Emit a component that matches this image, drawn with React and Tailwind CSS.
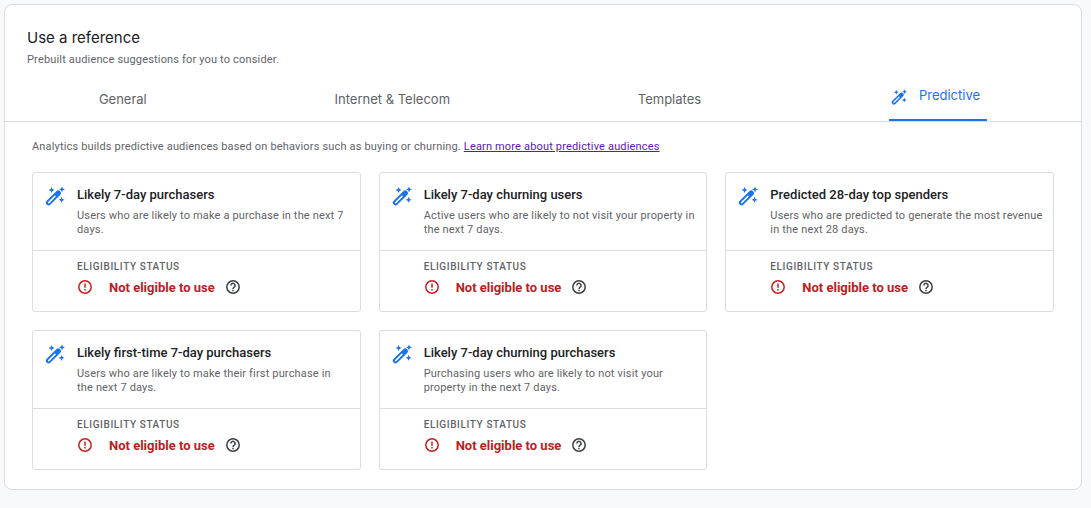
import React from "react";

const audiences = [
  { title: "Likely 7-day purchasers", text: "Users who are likely to make a purchase in the next 7 days." },
  { title: "Likely 7-day churning users", text: "Active users who are likely to not visit your property in the next 7 days." },
  { title: "Predicted 28-day top spenders", text: "Users who are predicted to generate the most revenue in the next 28 days." },
  { title: "Likely first-time 7-day purchasers", text: "Users who are likely to make their first purchase in the\u00a0next 7 days." },
  { title: "Likely 7-day churning purchasers", text: "Purchasing users who are likely to not visit your property in the next 7 days." },
];

function Wand({ className }) {
  return (
    <svg viewBox="0 0 20 20" className={className} aria-hidden="true">
      <path d="M3.6 16.7L13.2 7.1" stroke="#1a73e8" strokeWidth="5.4" strokeLinecap="round" />
      <path d="M3.7 16.6L10 10.3" stroke="#fff" strokeWidth="1.5" strokeLinecap="round" />
      <g fill="#1a73e8">
        <path d="M6.6 1l.9 2.1 2.1.9-2.1.9-.9 2.1-.9-2.1-2.1-.9 2.1-.9z" />
        <path d="M17 .4l.9 2.1 2.1.9-2.1.9-.9 2.1-.9-2.1-2.1-.9 2.1-.9z" />
        <path d="M16.6 10.8l.9 2.1 2.1.9-2.1.9-.9 2.1-.9-2.1-2.1-.9 2.1-.9z" />
      </g>
    </svg>
  );
}

function ErrorIcon({ className }) {
  return (
    <svg viewBox="0 0 16 16" className={className} fill="none" stroke="currentColor" strokeWidth="1.5" aria-hidden="true">
      <circle cx="8" cy="8" r="6.2" />
      <path d="M8 4.5v4.2M8 9.9v1.6" />
    </svg>
  );
}

function HelpIcon({ className }) {
  return (
    <svg viewBox="0 0 16 16" className={className} fill="none" stroke="currentColor" strokeWidth="1.5" aria-hidden="true">
      <circle cx="8" cy="8" r="6.2" />
      <path d="M5.9 6.5a2.1 2.1 0 1 1 3.3 1.7C8.4 8.8 8 9.1 8 9.9M8 10.7v1.5" />
    </svg>
  );
}

function AudienceCard({ title, text }) {
  return (
    <article className="rounded-[3px] border border-[#dadce0]">
      <div className="flex gap-3 border-b border-[#dadce0] py-[13px] pr-2.5 pl-3">
        <Wand className="size-5 shrink-0" />
        <div className="pt-px">
          <h2 className="text-[13px] leading-4 font-medium text-[#202124]">{title}</h2>
          <p className="mt-1.5 text-[11px] leading-[14px] tracking-[0.015em] text-[#5f6368]">{text}</p>
        </div>
      </div>
      <div className="pt-2.5 pb-[13px] pl-11">
        <h3 className="text-[10px] leading-3 font-medium tracking-[0.06em] text-[#5f6368] uppercase">Eligibility status</h3>
        <div className="mt-[5px] flex items-start">
          <ErrorIcon className="mt-px size-4 text-[#c5221f]" />
          <span className="ml-4 text-[13px] leading-5 font-bold text-[#b9211f]">Not eligible to use</span>
          <button type="button" aria-label="Eligibility help" className="mt-px ml-2.5 text-[#3c4043]">
            <HelpIcon className="size-4" />
          </button>
        </div>
      </div>
    </article>
  );
}

export default function App() {
  return (
    <div className="min-h-screen bg-[#f8f9fa] pt-1 pr-[9px] pb-4 pl-1 font-['Roboto',sans-serif]">
      <main className="rounded-lg border border-[#dadce0] bg-white">
        <header className="px-[22px] pt-[23px]">
          <h1 className="font-['Inter',sans-serif] text-[15px] leading-5 text-[#202124]">Use a reference</h1>
          <p className="mt-1 text-[11px] leading-4 tracking-[0.015em] text-[#5f6368]">Prebuilt audience suggestions for you to consider.</p>
        </header>
        <div role="tablist" className="mt-1 flex h-[50px] justify-around border-b border-[#dadce0] font-['Inter',sans-serif] text-[13px] leading-4 text-[#5f6368]">
          {["General", "Internet & Telecom", "Templates"].map((tab) => (
            <button key={tab} type="button" role="tab" aria-selected="false" className="pt-1">{tab}</button>
          ))}
          <button type="button" role="tab" aria-selected="true" className="flex items-center gap-3 border-b-2 border-[#1a73e8] pr-[7px] pb-0.5 pl-0.5 text-[#1a73e8]">
            <Wand className="mt-1 size-4" />
            Predictive
          </button>
        </div>
        <section className="pt-[17px] pr-[27px] pb-[19px] pl-[27px]">
          <p className="text-[11px] leading-4 tracking-[0.015em] text-[#5f6368]">
            Analytics builds predictive audiences based on behaviors such as buying or churning.{" "}
            <a href="#learn-more" className="text-[#5b17c0] underline">Learn more about predictive audiences</a>
          </p>
          <div className="mt-[17px] grid grid-cols-3 gap-[18px]">
            {audiences.map((audience) => <AudienceCard key={audience.title} {...audience} />)}
          </div>
        </section>
      </main>
    </div>
  );
}
